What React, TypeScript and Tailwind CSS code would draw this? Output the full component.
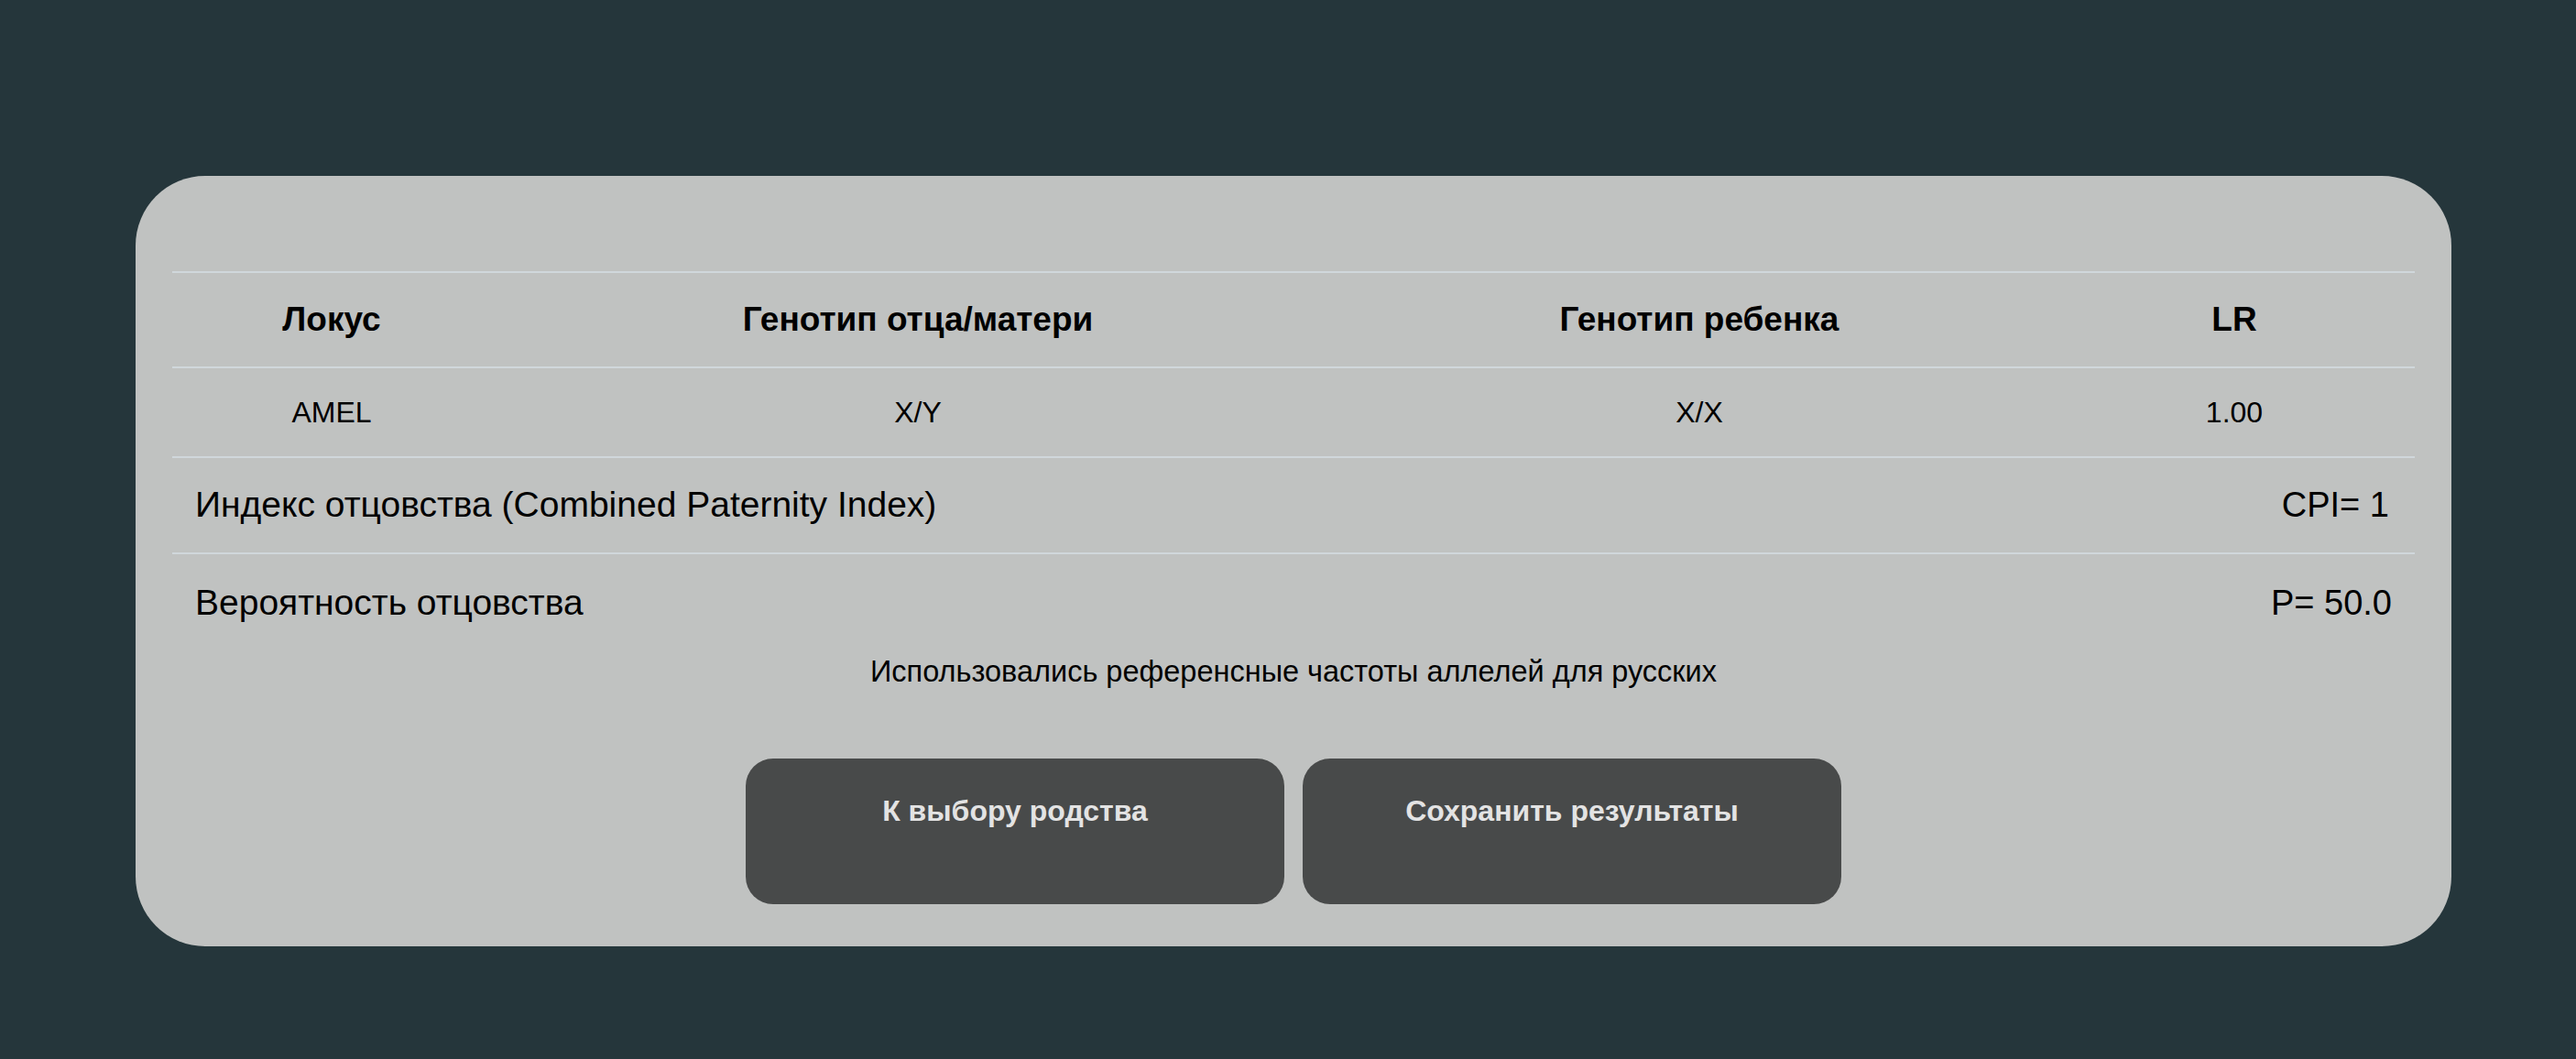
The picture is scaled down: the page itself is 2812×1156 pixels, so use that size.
const headers = ["Локус", "Генотип отца/матери", "Генотип ребенка", "LR"];
const row = ["AMEL", "X/Y", "X/X", "1.00"];

const App = () => {
  return (
    <div className="min-h-screen bg-[#25363b] pt-[192px] pb-[123px] font-['Liberation_Sans',Arial,sans-serif] text-black">
      <div className="ml-[148px] w-[2528px] rounded-[76px] bg-[#c0c2c1] px-[40px] pt-[104px] pb-[46px]">
        <div className="grid h-[104px] grid-cols-[348px_932px_774px_394px] items-center border-t-2 border-[#d0d7db] text-[37px] font-bold">
          {headers.map((h) => (
            <div key={h} className="text-center">
              {h}
            </div>
          ))}
        </div>
        <div className="grid h-[98px] grid-cols-[348px_932px_774px_394px] items-center border-t-2 border-[#d0d7db] text-[32px]">
          {row.map((c) => (
            <div key={c} className="text-center">
              {c}
            </div>
          ))}
        </div>
        <div className="flex h-[105px] items-center justify-between border-t-2 border-[#d0d7db] pl-[25px] pr-[28px] text-[38px]">
          <span className="text-[39px]">Индекс отцовства (Combined Paternity Index)</span>
          <span>CPI= 1</span>
        </div>
        <div className="flex h-[108px] items-center justify-between border-t-2 border-[#d0d7db] pl-[25px] pr-[25px] text-[38px]">
          <span className="text-[39px]">Вероятность отцовства</span>
          <span>P= 50.0</span>
        </div>
        <p className="mt-[4px] text-center text-[32.5px] leading-[36px]">
          Использовались референсные частоты аллелей для русских
        </p>
        <div className="mt-[77px] flex justify-center gap-[20px]">
          <button className="flex h-[159px] w-[588px] items-start justify-center rounded-[30px] bg-[#484a4a] pt-[38px] text-[32px] font-bold leading-[38px] text-[#e3e3e3]">
            К выбору родства
          </button>
          <button className="flex h-[159px] w-[588px] items-start justify-center rounded-[30px] bg-[#484a4a] pt-[38px] text-[32px] font-bold leading-[38px] text-[#e3e3e3]">
            Сохранить результаты
          </button>
        </div>
      </div>
    </div>
  );
};

export default App;
